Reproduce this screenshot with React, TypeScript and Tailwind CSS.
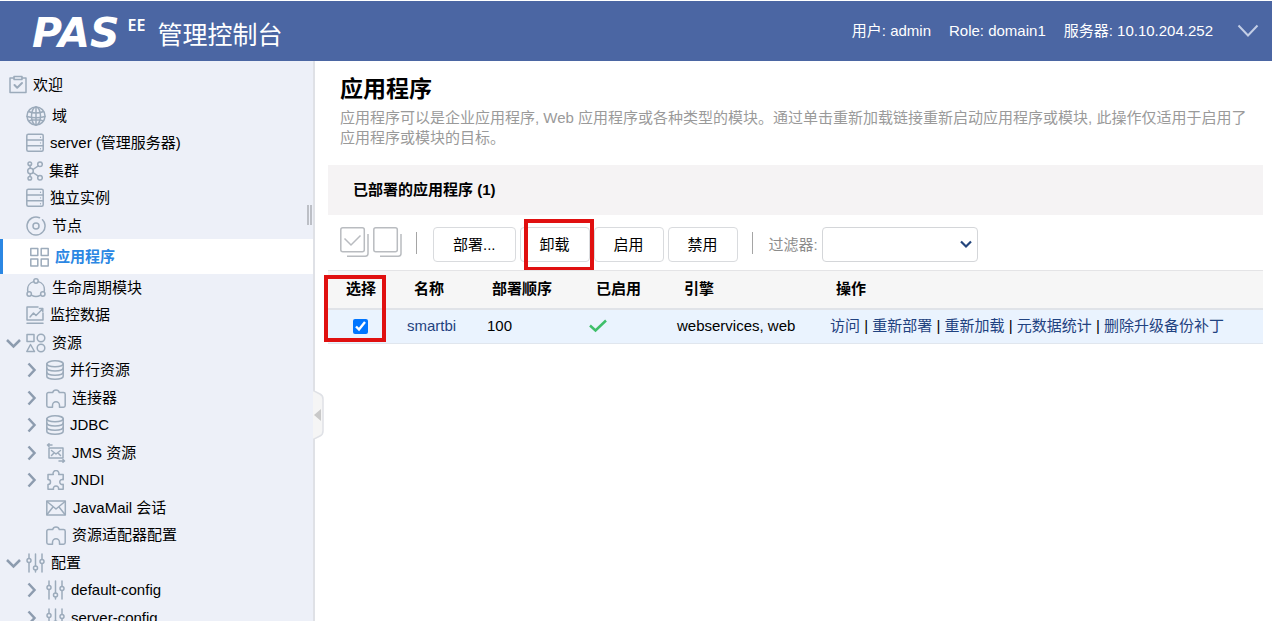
import { useState } from 'react';
import type { ReactNode } from 'react';

interface IconProps {
  width: number;
  children: ReactNode;
}

function Icon({ width, children }: IconProps) {
  return (
    <svg
      width={width}
      height={20}
      viewBox={`0 0 ${width} 20`}
      fill="none"
      stroke="#9cabbb"
      strokeWidth={1.5}
      strokeLinecap="round"
      strokeLinejoin="round"
      className="shrink-0"
      aria-hidden="true"
    >
      {children}
    </svg>
  );
}

const ServerIcon = () => (
  <Icon width={18}>
    <rect x="0.8" y="1.3" width="16.4" height="17" rx="1.5" />
    <path d="M1 7h16M1 12.8h16" />
    <path d="M14.5 4.2v.2M14.5 9.8v.2M14.5 15.6v.2" strokeWidth={1.2} />
  </Icon>
);

const DatabaseIcon = () => (
  <Icon width={18}>
    <ellipse cx="9" cy="3.8" rx="8.2" ry="3" />
    <path d="M0.8 3.8v12.4c0 1.7 3.7 3 8.2 3s8.2-1.3 8.2-3V3.8" />
    <path d="M0.8 8c0 1.7 3.7 3 8.2 3s8.2-1.3 8.2-3M0.8 12.2c0 1.7 3.7 3 8.2 3s8.2-1.3 8.2-3" />
  </Icon>
);

const ConnectorIcon = () => (
  <Icon width={20}>
    <path d="M2.5 4.5h4.2a3.4 3.4 0 0 1 6.600 0h4.200a1.700 1.700 0 0 1 1.700 1.700v11.300a1.700 1.700 0 0 1-1.700 1.700H13.500v-2a3.500 3.500 0 0 0-7 0v2h-4a1.700 1.700 0 0 1-1.700-1.700V6.200a1.700 1.700 0 0 1 1.700-1.700z" />
  </Icon>
);

const SlidersIcon = () => (
  <Icon width={19}>
    <circle cx="3" cy="7.5" r="2" />
    <circle cx="9.5" cy="15" r="2" />
    <circle cx="16" cy="8.5" r="2" />
    <path d="M3 1v4.5M3 9.5V19M9.5 1v12M9.5 17v2M16 1v5.5M16 10.5V19" />
  </Icon>
);

const WelcomeIcon = () => (
  <Icon width={18}>
    <path d="M5 3H1v14.5h16V3h-4" />
    <path d="M5 1.5h8v3H5z" />
    <path d="M5.5 10l2.700 2.700 4.800-4.700" strokeWidth={2} />
  </Icon>
);

const GlobeIcon = () => (
  <Icon width={20}>
    <circle cx="10" cy="10" r="9" />
    <ellipse cx="10" cy="10" rx="4.5" ry="9" />
    <path d="M10 1v18M2.5 5.500c4 2 11 2 15 0M1 10.500c5 1.500 13 1.500 18 0M2.500 15c4-1.800 11-1.800 15 0" />
  </Icon>
);

const ClusterIcon = () => (
  <Icon width={17}>
    <circle cx="4.5" cy="10" r="2.8" />
    <circle cx="3.8" cy="2.8" r="1.8" />
    <circle cx="14" cy="3.2" r="2.3" />
    <circle cx="3.8" cy="17.2" r="1.8" />
    <circle cx="14" cy="16.8" r="2.3" />
    <path d="M7 8.500l5.300-3.700M7 11.500l5.300 3.700M4 4.600l.2 2.500M4 15.400l.2-2.500" />
  </Icon>
);

const NodeIcon = () => (
  <Icon width={20}>
    <path d="M13.5 1.700A9 9 0 1 0 18.900 8.500M16.500 3.800a9 9 0 0 1 2.400 4.700" />
    <circle cx="10" cy="10" r="3" />
  </Icon>
);

const AppsIcon = () => (
  <Icon width={19}>
    <rect x="0.8" y="1.5" width="7" height="7" />
    <rect x="11.2" y="1.5" width="7" height="7" />
    <rect x="0.8" y="12" width="7" height="7" />
    <rect x="11.2" y="12" width="7" height="7" />
  </Icon>
);

const LifecycleIcon = () => (
  <Icon width={20}>
    <circle cx="10" cy="3" r="2.2" />
    <circle cx="3.2" cy="16" r="2.2" />
    <circle cx="16.8" cy="16" r="2.2" />
    <path d="M7.5 3.6C3.5 4.700 1 8.500 1.800 13.300M12.500 3.600c4 1.100 6.500 4.900 5.700 9.700M5.800 17.300c2.500 1.500 5.900 1.500 8.400 0" />
  </Icon>
);

const MonitorIcon = () => (
  <Icon width={18}>
    <path d="M12 2H1v13h16V8M1 18.300h16M4 12l3.500-4 2.500 2.500 6.500-6.500M13.500 3.500h3.300v3" />
  </Icon>
);

const ResourceIcon = () => (
  <Icon width={20}>
    <rect x="1" y="1.5" width="7" height="7" />
    <circle cx="15" cy="5" r="3.8" />
    <circle cx="15" cy="15" r="3.8" />
    <path d="M4.5 11.500L8.500 18.500H0.800z" />
  </Icon>
);

const JmsIcon = () => (
  <Icon width={20}>
    <rect x="3" y="5" width="14" height="10" />
    <path d="M5.5 7.500l4.500 3.500 4.500-3.500M5.500 12.500l2-2M14.500 12.500l-2-2" />
    <path d="M6 2H1.500M3 .8L1.500 2 3 3.500M13 18h5.500M17 16.500l1.500 1.500-1.500 1.200" />
  </Icon>
);

const JndiIcon = () => (
  <Icon width={19}>
    <path d="M2 4.500h5.300a2.900 2.900 0 1 1 5.400 0h4.500v5.200a2.500 2.500 0 1 0 0 4.600v4.900h-4.700a2.600 2.600 0 1 0-5 0H2v-4.700a2.500 2.500 0 1 0 0-5V4.500z" />
  </Icon>
);

const MailIcon = () => (
  <Icon width={21}>
    <rect x="0.8" y="3" width="18.5" height="14" />
    <path d="M1 3.500l9 7.500 9-7.500M1 16.500l6-7.500M19 16.500l-6-7.500" />
  </Icon>
);

interface TreeNode {
  label: string;
  level: 0 | 1 | 2;
  icon: ReactNode;
  toggle?: 'open' | 'closed';
}

const NODES: TreeNode[] = [
  { label: '欢迎', level: 0, icon: <WelcomeIcon /> },
  { label: '域', level: 1, icon: <GlobeIcon /> },
  { label: 'server (管理服务器)', level: 1, icon: <ServerIcon /> },
  { label: '集群', level: 1, icon: <ClusterIcon /> },
  { label: '独立实例', level: 1, icon: <ServerIcon /> },
  { label: '节点', level: 1, icon: <NodeIcon /> },
  { label: '应用程序', level: 1, icon: <AppsIcon /> },
  { label: '生命周期模块', level: 1, icon: <LifecycleIcon /> },
  { label: '监控数据', level: 1, icon: <MonitorIcon /> },
  { label: '资源', level: 1, icon: <ResourceIcon />, toggle: 'open' },
  { label: '并行资源', level: 2, icon: <DatabaseIcon />, toggle: 'closed' },
  { label: '连接器', level: 2, icon: <ConnectorIcon />, toggle: 'closed' },
  { label: 'JDBC', level: 2, icon: <DatabaseIcon />, toggle: 'closed' },
  { label: 'JMS 资源', level: 2, icon: <JmsIcon />, toggle: 'closed' },
  { label: 'JNDI', level: 2, icon: <JndiIcon />, toggle: 'closed' },
  { label: 'JavaMail 会话', level: 2, icon: <MailIcon /> },
  { label: '资源适配器配置', level: 2, icon: <ConnectorIcon /> },
  { label: '配置', level: 1, icon: <SlidersIcon />, toggle: 'open' },
  { label: 'default-config', level: 2, icon: <SlidersIcon />, toggle: 'closed' },
  { label: 'server-config', level: 2, icon: <SlidersIcon />, toggle: 'closed' },
];

const INDENT = ['pl-[9px]', 'pl-[6px]', 'pl-[26px]'];

const ACTIONS = ['访问', '重新部署', '重新加载', '元数据统计', '删除升级备份补丁'];

function Toggle({ state }: { state?: 'open' | 'closed' }) {
  return (
    <span className="flex w-5 shrink-0 items-center">
      {state && (
        <svg width="16" height="16" viewBox="0 0 16 16" fill="none" stroke="#8d9caf" strokeWidth="2.5" aria-hidden="true">
          <path d={state === 'open' ? 'M1 5l6.5 6.5L14 5' : 'M2.5 1.5l6 6.5-6 6.5'} />
        </svg>
      )}
    </span>
  );
}

function Sidebar({ active, onSelect }: { active: string; onSelect: (label: string) => void }) {
  return (
    <aside className="relative w-[315px] shrink-0 border-r-2 border-[#dfe1e6] bg-[#edf0f8]">
      <nav className="h-full overflow-hidden pt-[10px]">
        <ul>
          {NODES.map((node) => {
            const isActive = node.label === active;
            return (
              <li
                key={node.label}
                className={
                  isActive
                    ? 'h-[35px] border-l-3 border-[#2b87e3] bg-white pl-px text-[#2b87e3]'
                    : 'h-7 first:mb-[3px] even:h-[27px]'
                }
              >
                <a
                  href="#"
                  onClick={() => onSelect(node.label)}
                  className={`flex h-full items-center ${INDENT[node.level]} ${isActive ? 'font-bold' : ''}`}
                >
                  {node.level > 0 && <Toggle state={node.toggle} />}
                  <span className="flex items-center gap-[6px] whitespace-nowrap">
                    {node.icon}
                    {node.label}
                  </span>
                </a>
              </li>
            );
          })}
        </ul>
      </nav>

      <div className="absolute top-[144px] right-0 flex h-5 gap-px pr-px">
        <span className="w-[2px] bg-[#bcbfc6]" />
        <span className="w-[2px] bg-[#bcbfc6]" />
      </div>
      <button type="button" aria-label="收起" className="absolute top-[329px] -right-[11px] h-[50px] w-[11px]">
        <svg width="11" height="50" viewBox="0 0 11 50" aria-hidden="true">
          <path d="M0 .5l7 3.500q3 1.500 3 5v32q0 3.500-3 5l-7 3.500" fill="#f5f5f5" stroke="#dfe1e6" strokeWidth="1.5" />
          <path d="M8 19v12L1 25z" fill="#c9c9c9" />
        </svg>
      </button>
    </aside>
  );
}

function StackIcon({ checked }: { checked?: boolean }) {
  return (
    <svg width="29" height="30" viewBox="0 0 29 30" fill="none" stroke="#b9bcc0" strokeWidth="1.5" aria-hidden="true">
      <rect x="0.8" y="0.8" width="23.5" height="24" rx="2" />
      <path d="M28 7v19.500q0 2.700-2.700 2.700H7" />
      {checked && <path d="M4.500 11.500l6.500 6.500 9.500-9.500" />}
    </svg>
  );
}

function ToolButton({ children }: { children: ReactNode }) {
  return (
    <button
      type="button"
      className="h-[35px] rounded border border-[#d9dbde] bg-white px-[19px] whitespace-nowrap text-black"
    >
      {children}
    </button>
  );
}

export default function App() {
  const [active, setActive] = useState('应用程序');
  const [selected, setSelected] = useState(true);

  return (
    <div className="flex h-screen flex-col overflow-hidden bg-white font-['Liberation_Sans','Noto_Sans_CJK_SC',sans-serif] text-[15px] leading-5 text-black">
      <header className="mt-px flex h-[60px] shrink-0 items-center justify-between bg-[#4b66a3] pr-[13px] pl-8 text-white">
        <div className="flex items-center">
          <span className="mt-1 font-['DejaVu_Sans'] text-[41px] leading-[56px] font-bold italic">PAS</span>
          <sup className="top-0 mb-3 ml-2 self-center font-['Noto_Sans'] text-[16px] font-semibold">EE</sup>
          <h1 className="mt-2 ml-3 text-[25px] leading-8">管理控制台</h1>
        </div>
        <div className="flex items-center gap-[18px] whitespace-nowrap">
          <span>用户: admin</span>
          <span>Role: domain1</span>
          <span>服务器: 10.10.204.252</span>
          <button type="button" aria-label="更多" className="ml-[6px]">
            <svg width="22" height="14" viewBox="0 0 22 14" fill="none" stroke="#c3cee6" strokeWidth="2" aria-hidden="true">
              <path d="M1.500 1.500L11 11.500l9.500-10" />
            </svg>
          </button>
        </div>
      </header>

      <div className="flex min-h-0 flex-1">
        <Sidebar active={active} onSelect={setActive} />

        <main className="min-w-0 flex-1 pt-3 pr-[9px] pl-[13px]">
          <div className="px-3">
            <h2 className="text-[23px] leading-8 font-bold">应用程序</h2>
            <p className="mt-[3px] text-[#9a9a9a]">
              应用程序可以是企业应用程序, Web 应用程序或各种类型的模块。通过单击重新加载链接重新启动应用程序或模块, 此操作仅适用于启用了应用程序或模块的目标。
            </p>
          </div>

          <h3 className="mt-[17px] flex h-[50px] items-center bg-[#f5f3f4] pl-[25px] font-bold">已部署的应用程序 (1)</h3>

          <div className="flex h-[55px] items-center pt-1 pl-3">
            <div className="flex gap-1">
              <button type="button" aria-label="全选" className="-mt-[5px]">
                <StackIcon checked />
              </button>
              <button type="button" aria-label="取消全选" className="-mt-[5px]">
                <StackIcon />
              </button>
            </div>
            <span className="mr-4 mb-1 ml-[14px] h-[22px] w-px bg-[#a5a5a5]" />
            <div className="flex gap-1">
              <ToolButton>部署...</ToolButton>
              <div className="relative">
                <ToolButton>卸载</ToolButton>
                <div className="pointer-events-none absolute -top-2 left-1 h-[52px] w-[70px] border-4 border-[#e01010]" />
              </div>
              <ToolButton>启用</ToolButton>
              <ToolButton>禁用</ToolButton>
            </div>
            <span className="mr-4 mb-1 ml-[14px] h-[22px] w-px bg-[#a5a5a5]" />
            <label htmlFor="filter" className="text-[#8c8c8c]">
              过滤器:
            </label>
            <div className="relative ml-1">
              <select id="filter" className="h-[35px] w-[156px] appearance-none rounded border border-[#d4d6d9] bg-white px-2">
                <option value=""></option>
              </select>
              <svg
                width="12"
                height="9"
                viewBox="0 0 12 9"
                fill="none"
                stroke="#23457c"
                strokeWidth="2.2"
                className="pointer-events-none absolute top-[13px] right-[6px]"
                aria-hidden="true"
              >
                <path d="M1 1.500l5 5 5-5" />
              </svg>
            </div>
          </div>

          <div className="relative">
            <table className="w-full table-fixed border-collapse text-left">
              <thead>
                <tr className="h-[38px] border-t border-b-2 border-t-[#e4e4e6] border-b-[#e0e3e8] bg-[#f6f6f6]">
                  <th className="w-[72px] pl-[18px]">选择</th>
                  <th className="w-20 pl-[14px]">名称</th>
                  <th className="w-[102px] pl-3">部署顺序</th>
                  <th className="w-[88px] pl-[14px]">已启用</th>
                  <th className="w-[153px] pl-[14px]">引擎</th>
                  <th className="pl-[13px]">操作</th>
                </tr>
              </thead>
              <tbody>
                <tr className="h-[35px] border-b border-[#e0e6ee] bg-[#eaf3fe]">
                  <td className="pl-[25px]">
                    <input
                      type="checkbox"
                      aria-label="选择 smartbi"
                      checked={selected}
                      onChange={(e) => setSelected(e.target.checked)}
                      className="block size-[15px] accent-[#0075ff]"
                    />
                  </td>
                  <td className="pl-[7px]">
                    <a href="#" className="text-[#1f4280]">
                      smartbi
                    </a>
                  </td>
                  <td className="pl-[7px]">100</td>
                  <td className="pl-[7px]">
                    <svg width="18" height="14" viewBox="0 0 18 14" fill="none" stroke="#3fbf6a" strokeWidth="2.5" aria-label="已启用">
                      <path d="M1 6.500l5.500 5L17 1.500" />
                    </svg>
                  </td>
                  <td className="pl-[7px] whitespace-nowrap">webservices, web</td>
                  <td className="pl-[7px] whitespace-nowrap">
                    {ACTIONS.map((action, i) => (
                      <span key={action}>
                        {i > 0 && ' | '}
                        <a href="#" className="text-[#1f4280]">
                          {action}
                        </a>
                      </span>
                    ))}
                  </td>
                </tr>
              </tbody>
            </table>
            <div className="pointer-events-none absolute top-[5px] -left-1 h-[67px] w-[62px] border-4 border-[#e01010]" />
          </div>
        </main>
      </div>
    </div>
  );
}
